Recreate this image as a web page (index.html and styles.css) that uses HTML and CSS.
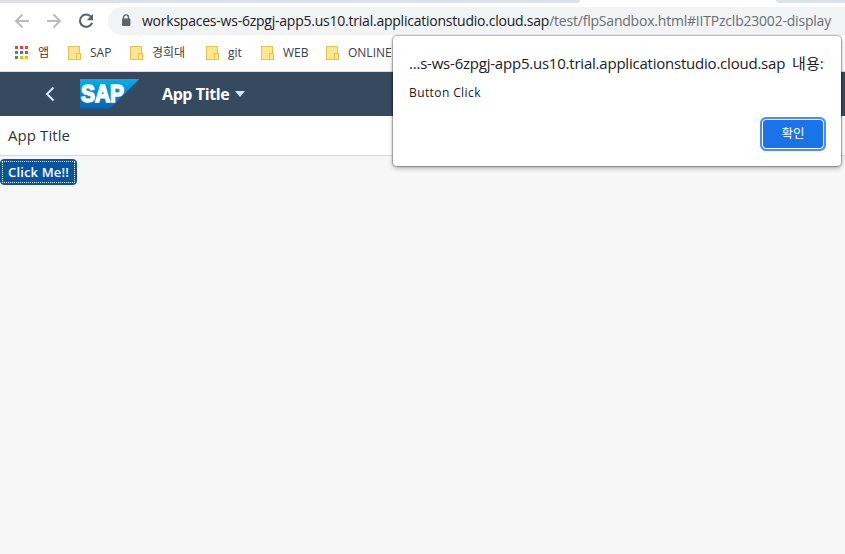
FILE: index.html
```html
<!DOCTYPE html>
<html lang="ko">
<head>
<meta charset="utf-8">
<title>App Title</title>
<link rel="stylesheet" href="styles.css">
</head>
<body>
<div class="tabstrip"><div class="tab-left"></div><div class="tab-right"></div></div>
<div class="toolbar">
  <svg class="nav" width="16" height="16" viewBox="0 0 16 16"><path d="M15 8H2.500M8.500 1.500L2 8l6.500 6.500" fill="none" stroke="#babcbe" stroke-width="2"/></svg>
  <svg class="nav" width="16" height="16" viewBox="0 0 16 16"><path d="M1 8h12.500M7.500 1.500L14 8l-6.500 6.500" fill="none" stroke="#babcbe" stroke-width="2"/></svg>
  <svg class="nav" width="16" height="16" viewBox="0 0 16 16"><path d="M13.300 4.200A6.200 6.200 0 1 0 14 9.800" fill="none" stroke="#5f6368" stroke-width="2.100"/><path d="M15 1v6.300H8.700z" fill="#5f6368"/></svg>
  <div class="omnibox">
    <svg width="10" height="13" viewBox="0 0 10 13"><path d="M2.500 5V3.400a2.500 2.500 0 0 1 5 0V5" fill="none" stroke="#5f6368" stroke-width="1.400"/><rect x="1" y="4.500" width="8.400" height="7.500" rx="1" fill="#5f6368"/></svg>
    <span class="url"><span class="host">workspaces-ws-6zpgj-app5.us10.trial.applicationstudio.cloud.sap</span><span class="path">/test/flpSandbox.html#IITPzclb23002-display</span></span>
  </div>
</div>
<div class="bookmarks">
  <div class="bm apps">
    <svg width="13" height="13" viewBox="0 0 13 13"><path fill="#ea4335" d="M0 0h3v3H0zM5 0h3v3H5zM10 0h3v3h-3zM10 5h3v3h-3z"/><path fill="#34a060" d="M0 5h3v3H0zM0 10h3v3H0z"/><path fill="#1a86f5" d="M5 5h3v3H5z"/><path fill="#fbb400" d="M5 10h3v3H5zM10 10h3v3h-3z"/></svg>
    <span>앱</span>
  </div>
  <div class="bm sap"><i class="folder"></i><span>SAP</span></div>
  <div class="bm khu"><i class="folder"></i><span>경희대</span></div>
  <div class="bm git"><i class="folder"></i><span>git</span></div>
  <div class="bm web"><i class="folder"></i><span>WEB</span></div>
  <div class="bm online"><i class="folder"></i><span>ONLINE</span></div>
</div>
<div class="shell">
  <svg class="back" width="10" height="16" viewBox="0 0 10 16"><path d="M8.500 1.500L2 8l6.500 6.500" fill="none" stroke="#d1e8ff" stroke-width="2"/></svg>
  <svg class="logo" width="60" height="30" viewBox="0 0 60 30">
    <defs><linearGradient id="g" x1="0" y1="0" x2="0" y2="1"><stop offset="0" stop-color="#00aeef"/><stop offset="1" stop-color="#0763b5"/></linearGradient></defs>
    <path d="M0 0h59.500L30 29.500H0z" fill="url(#g)"/>
    <text class="logo-text" x="1" y="22.800" textLength="43" lengthAdjust="spacingAndGlyphs">SAP</text>
  </svg>
  <span class="shell-title">App Title</span>
  <i class="caret"></i>
</div>
<div class="page-header"><span class="page-title">App Title</span></div>
<main class="content"><button class="click"><span>Click Me!!</span></button></main>
<div class="dialog">
  <div class="dialog-title"><span class="origin">...s-ws-6zpgj-app5.us10.trial.applicationstudio.cloud.sap</span><span class="says">내용:</span></div>
  <div class="dialog-message"><span class="message">Button Click</span></div>
  <div class="actions"><button class="ok">확인</button></div>
</div>
</body>
</html>
```
FILE: styles.css
```css
* { box-sizing: border-box; }
body {
  margin: 0;
  height: 554px;
  display: flex;
  flex-direction: column;
  overflow: hidden;
  background: #f7f7f7;
  font-family: "Open Sans", "Noto Sans CJK KR", sans-serif;
  white-space: nowrap;
}
.tabstrip { flex: none; height: 3px; display: flex; justify-content: space-between; background: #fff; }
.tab-left { width: 580px; background: #dee1e6; border-bottom-right-radius: 4px; }
.tab-right { width: 69px; background: #dee1e6; border-bottom-left-radius: 4px; }
.toolbar { flex: none; height: 35px; padding-left: 14px; display: flex; align-items: center; background: #fff; }
.nav { flex: none; margin-right: 16px; }
.nav:nth-child(3) { margin-right: 14px; }
.omnibox {
  flex: none;
  width: 760px;
  height: 28px;
  padding-left: 13px;
  display: flex;
  align-items: center;
  border-radius: 14px;
  background: #f1f3f4;
}
.omnibox svg { flex: none; margin-right: 11px; }
.url { font-size: 14px; line-height: 20px; color: #6b6f73; }
.host { color: #202124; letter-spacing: -0.23px; }
.path { letter-spacing: -0.21px; }
.bookmarks { flex: none; height: 34px; padding: 0 0 4px 15px; display: flex; align-items: center; background: #fff; border-bottom: 1px solid #dadce0; }
.bm { flex: none; display: flex; align-items: center; font-size: 12px; line-height: 18px; color: #3c4043; }
.bm span { padding-top: 1px; }
.apps { width: 53px; gap: 10px; }
.sap { width: 62px; }
.khu { width: 76px; }
.git { width: 55px; }
.web { width: 65px; }
.folder { position: relative; flex: none; width: 12px; height: 14px; margin-right: 10px; border: 1px solid #e8c34b; background: #ffe693; }
.folder::after { content: ""; position: absolute; right: -2px; bottom: -1px; width: 3px; height: 5px; border: 1px solid #e8c34b; background: #ffe693; }
.shell { flex: none; height: 44px; padding-left: 45px; display: flex; align-items: center; background: #354a5f; }
.back { margin-right: 25px; }
.logo { margin-right: 22px; }
.logo-text { font: bold 23.500px "Liberation Sans", sans-serif; fill: #fff; stroke: #fff; stroke-width: 1.600px; }
.shell-title { font-size: 16px; font-weight: 700; color: #fff; letter-spacing: -0.4px; }
.caret { margin-left: 6px; border: 5px solid transparent; border-top: 6px solid #d1e8ff; border-bottom: 0; }
.page-header { flex: none; height: 40px; padding: 0 0 2px 8px; display: flex; align-items: center; background: #fff; border-bottom: 1px solid #d9d9d9; }
.page-title { font-size: 15px; color: #32363a; letter-spacing: 0.08px; }
.content { flex: 1; padding-top: 3px; display: flex; align-items: flex-start; }
button { font-family: inherit; }
.click { width: 77px; height: 26px; padding: 1px; border: 1px solid #0854a0; border-radius: 4px; background: #0854a0; color: #fff; font-size: 13px; font-weight: 600; line-height: 20px; }
.click span { display: block; border: 1px dotted #fff; letter-spacing: 0.15px; }
.dialog {
  position: absolute;
  left: 393px;
  top: 36px;
  width: 448px;
  height: 130px;
  padding: 16px;
  display: flex;
  flex-direction: column;
  border-radius: 4px;
  background: #fff;
  color: #202124;
  box-shadow: 0 0 1px 1px #0004, 0 2px 5px #0005;
}
.dialog-title { height: 24px; display: flex; gap: 7px; font-size: 15px; line-height: 23px; }
.origin { letter-spacing: -0.22px; }
.dialog-message { margin-top: 7px; height: 20px; font-size: 12px; line-height: 19px; letter-spacing: 0.4px; }
.actions { margin-top: 16px; display: flex; justify-content: flex-end; }
.ok { width: 62px; height: 30px; margin-right: 1px; padding: 0; border: 1px solid #fff; border-radius: 4px; background: #1a73e8; color: #fff; font-size: 12.500px; line-height: 26px; box-shadow: 0 0 0 2px #4c8df5; }
```
